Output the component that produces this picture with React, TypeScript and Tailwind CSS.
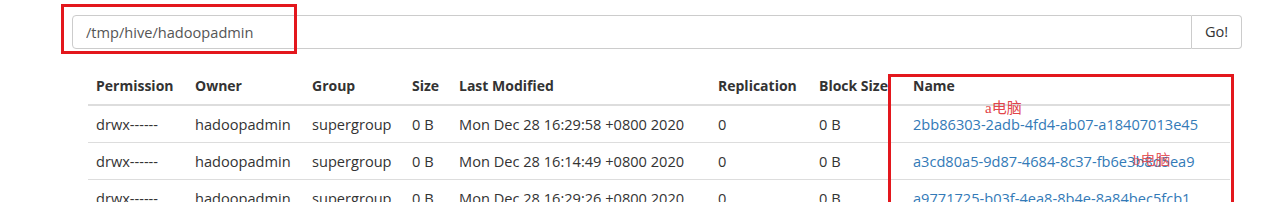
import React from "react";

const rows = [
  { date: "Mon Dec 28 16:29:58 +0800 2020", name: "2bb86303-2adb-4fd4-ab07-a18407013e45" },
  { date: "Mon Dec 28 16:14:49 +0800 2020", name: "a3cd80a5-9d87-4684-8c37-fb6e3b8d5ea9" },
  { date: "Mon Dec 28 16:29:26 +0800 2020", name: "a9771725-b03f-4ea8-8b4e-8a84bec5fcb1" },
];

const cols = [
  { label: "Permission", w: "w-[99px]" },
  { label: "Owner", w: "w-[117px]" },
  { label: "Group", w: "w-[100px]" },
  { label: "Size", w: "w-[47px]" },
  { label: "Last Modified", w: "w-[259px]" },
  { label: "Replication", w: "w-[101px]" },
  { label: "Block Size", w: "w-[94px]" },
  { label: "Name", w: "w-[325px]" },
];

export default function App() {
  return (
    <div className="relative h-[202px] w-[1280px] overflow-hidden bg-white text-[14.6px] text-[#333] [font-family:'Open_Sans',sans-serif]">
      <div className="pl-[72px] pr-[38px] pt-[15px]">
        <div className="flex h-[34px]">
          <input
            readOnly
            value="/tmp/hive/hadoopadmin"
            className="h-full flex-1 rounded-l-[4px] border border-[#ccc] px-[13px] text-[14.6px] text-[#555] outline-none"
          />
          <button className="h-full w-[50px] rounded-r-[4px] border border-l-0 border-[#ccc] bg-white text-[14.6px] text-[#333]">
            Go!
          </button>
        </div>
      </div>

      <div className="pl-[88px] pt-[19px]">
        <table className="table-fixed border-collapse">
          <thead>
            <tr>
              {cols.map((c) => (
                <th
                  key={c.label}
                  className={`${c.w} whitespace-nowrap border-b-2 border-[#ddd] px-2 py-2 text-left text-[14px] font-bold leading-5`}
                >
                  {c.label}
                </th>
              ))}
            </tr>
          </thead>
          <tbody>
            {rows.map((r) => (
              <tr key={r.name} className="border-b border-[#ddd]">
                <td className="px-2 py-2 leading-5">drwx------</td>
                <td className="px-2 py-2 leading-5">hadoopadmin</td>
                <td className="px-2 py-2 leading-5">supergroup</td>
                <td className="px-2 py-2 leading-5">0 B</td>
                <td className="whitespace-nowrap px-2 py-2 leading-5">{r.date}</td>
                <td className="px-2 py-2 leading-5">0</td>
                <td className="px-2 py-2 leading-5">0 B</td>
                <td className="whitespace-nowrap px-2 py-2 leading-5">
                  <a className="text-[#337ab7]">{r.name}</a>
                </td>
              </tr>
            ))}
          </tbody>
        </table>
      </div>

      {/* red annotation marks */}
      <div className="absolute left-[61px] top-[4px] h-[50px] w-[236px] border-[3px] border-[#e3171d]" />
      <div className="absolute left-[888px] top-[74px] h-[140px] w-[346px] border-[3px] border-[#e3171d]" />
      <span className="absolute left-[985px] top-[100px] text-[15px] leading-4 text-[#e2454a] [font-family:'Liberation_Serif','Noto_Sans_CJK_SC',serif]">
        a电脑
      </span>
      <span className="absolute left-[1133px] top-[152px] text-[15px] leading-4 text-[#e2454a]/90 [font-family:'Liberation_Serif','Noto_Sans_CJK_SC',serif]">
        b电脑
      </span>
    </div>
  );
}
